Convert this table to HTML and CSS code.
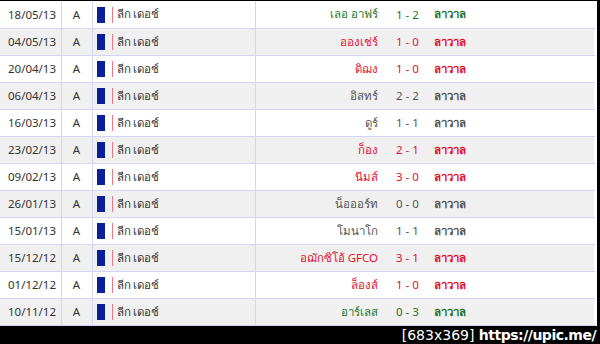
FILE: index.html
```html
<!DOCTYPE html>
<html lang="th">

<head>
  <meta charset="UTF-8">
  <meta name="viewport" content="width=device-width, initial-scale=1.0">
  <title>ผลการแข่งขัน ลาวาล</title>
  <link rel="stylesheet" href="styles.css">
</head>

<body>
<div class="shot">
  <table class="results">
    <colgroup>
      <col class="c-date">
      <col class="c-venue">
      <col class="c-comp">
      <col class="c-home">
      <col class="c-score">
      <col class="c-away">
      <col>
    </colgroup>
    <tbody>
      <tr class="win">
        <td class="date">18/05/13</td><td class="venue">A</td>
        <td class="comp"><span class="flag"></span>ลีก เดอช์</td>
        <td class="home">เลอ อาฟร์</td><td class="score">1 - 2</td><td class="away">ลาวาล</td><td></td>
      </tr>
      <tr class="loss">
        <td class="date">04/05/13</td><td class="venue">A</td>
        <td class="comp"><span class="flag"></span>ลีก เดอช์</td>
        <td class="home">อองเช่ร์</td><td class="score">1 - 0</td><td class="away">ลาวาล</td><td></td>
      </tr>
      <tr class="loss">
        <td class="date">20/04/13</td><td class="venue">A</td>
        <td class="comp"><span class="flag"></span>ลีก เดอช์</td>
        <td class="home">ดิฌง</td><td class="score">1 - 0</td><td class="away">ลาวาล</td><td></td>
      </tr>
      <tr class="draw">
        <td class="date">06/04/13</td><td class="venue">A</td>
        <td class="comp"><span class="flag"></span>ลีก เดอช์</td>
        <td class="home">อิสทร์</td><td class="score">2 - 2</td><td class="away">ลาวาล</td><td></td>
      </tr>
      <tr class="draw">
        <td class="date">16/03/13</td><td class="venue">A</td>
        <td class="comp"><span class="flag"></span>ลีก เดอช์</td>
        <td class="home">ดูร์</td><td class="score">1 - 1</td><td class="away">ลาวาล</td><td></td>
      </tr>
      <tr class="loss">
        <td class="date">23/02/13</td><td class="venue">A</td>
        <td class="comp"><span class="flag"></span>ลีก เดอช์</td>
        <td class="home">ก็อง</td><td class="score">2 - 1</td><td class="away">ลาวาล</td><td></td>
      </tr>
      <tr class="loss">
        <td class="date">09/02/13</td><td class="venue">A</td>
        <td class="comp"><span class="flag"></span>ลีก เดอช์</td>
        <td class="home">นีมส์</td><td class="score">3 - 0</td><td class="away">ลาวาล</td><td></td>
      </tr>
      <tr class="draw">
        <td class="date">26/01/13</td><td class="venue">A</td>
        <td class="comp"><span class="flag"></span>ลีก เดอช์</td>
        <td class="home">น็อออร์ท</td><td class="score">0 - 0</td><td class="away">ลาวาล</td><td></td>
      </tr>
      <tr class="draw">
        <td class="date">15/01/13</td><td class="venue">A</td>
        <td class="comp"><span class="flag"></span>ลีก เดอช์</td>
        <td class="home">โมนาโก</td><td class="score">1 - 1</td><td class="away">ลาวาล</td><td></td>
      </tr>
      <tr class="loss">
        <td class="date">15/12/12</td><td class="venue">A</td>
        <td class="comp"><span class="flag"></span>ลีก เดอช์</td>
        <td class="home">อฌักซิโอ้ GFCO</td><td class="score">3 - 1</td><td class="away">ลาวาล</td><td></td>
      </tr>
      <tr class="loss">
        <td class="date">01/12/12</td><td class="venue">A</td>
        <td class="comp"><span class="flag"></span>ลีก เดอช์</td>
        <td class="home">ล็องส์</td><td class="score">1 - 0</td><td class="away">ลาวาล</td><td></td>
      </tr>
      <tr class="win">
        <td class="date">10/11/12</td><td class="venue">A</td>
        <td class="comp"><span class="flag"></span>ลีก เดอช์</td>
        <td class="home">อาร์เลส</td><td class="score">0 - 3</td><td class="away">ลาวาล</td><td></td>
      </tr>
    </tbody>
  </table>
  <div class="stamp"><span class="size">[683x369]</span> <span class="site">https://upic.me/</span></div>
</div>
</body>
</html>
```

FILE: styles.css
```css
html,
body {
  margin: 0;
  padding: 0;
  background-color: #000;
  font-family: Tahoma, 'Noto Sans', 'Liberation Sans', sans-serif;
}
.shot {
  width: 600px;
  height: 344px;
  padding-top: 1px;
  box-sizing: border-box;
}
.results {
  width: 597px;
  table-layout: fixed;
  border-collapse: collapse;
  background-color: #fff;
  font-size: 11.5px;
  color: #333;
}
.c-date { width: 61px; }
.c-venue { width: 31px; }
.c-comp { width: 163px; }
.c-home { width: 133px; }
.c-score { width: 37px; }
.c-away { width: 170px; }
.results tr {
  height: 27px;
  border-bottom: 1px solid #d4d4f4;
}
.results tr:nth-child(even) {
  background-color: #f0f0f0;
}
.results td {
  padding: 0;
  white-space: nowrap;
  vertical-align: middle;
}
.results td:last-child {
  border-right: 3px solid #fff;
  box-shadow: inset -1px 0 0 #d4d4f4;
}
.date {
  padding-left: 8px !important;
  border-right: 1px solid #d4d4f4;
}
.venue {
  text-align: center;
  border-right: 1px solid #d4d4f4;
}
.comp {
  padding-left: 4px !important;
  border-right: 1px solid #d4d4f4;
}
.flag {
  display: inline-block;
  width: 8px;
  height: 16px;
  margin-right: 12px;
  vertical-align: middle;
  background-color: #0c1f9a;
  position: relative;
}
.flag::after {
  content: '';
  position: absolute;
  left: 15px;
  top: 0;
  width: 1px;
  height: 16px;
  background-color: #ec7a84;
}
.home {
  text-align: right;
  padding-right: 10px !important;
}
.score {
  padding-left: 8px !important;
}
.away {
  padding-left: 9px !important;
  font-weight: 700;
}
.win td.home,
.win td.score,
.win td.away {
  color: #24772a;
}
.loss td.home,
.loss td.score,
.loss td.away {
  color: #e3102c;
}
.draw td.home,
.draw td.score,
.draw td.away {
  color: #555;
}
.stamp {
  height: 19px;
  width: 596px;
  text-align: right;
  color: #fff;
  font-size: 14px;
  line-height: 19px;
  font-family: 'DejaVu Sans', sans-serif;
}
.size {
  font-weight: 400;
}
.site {
  font-weight: 700;
  letter-spacing: -0.5px;
}
```
